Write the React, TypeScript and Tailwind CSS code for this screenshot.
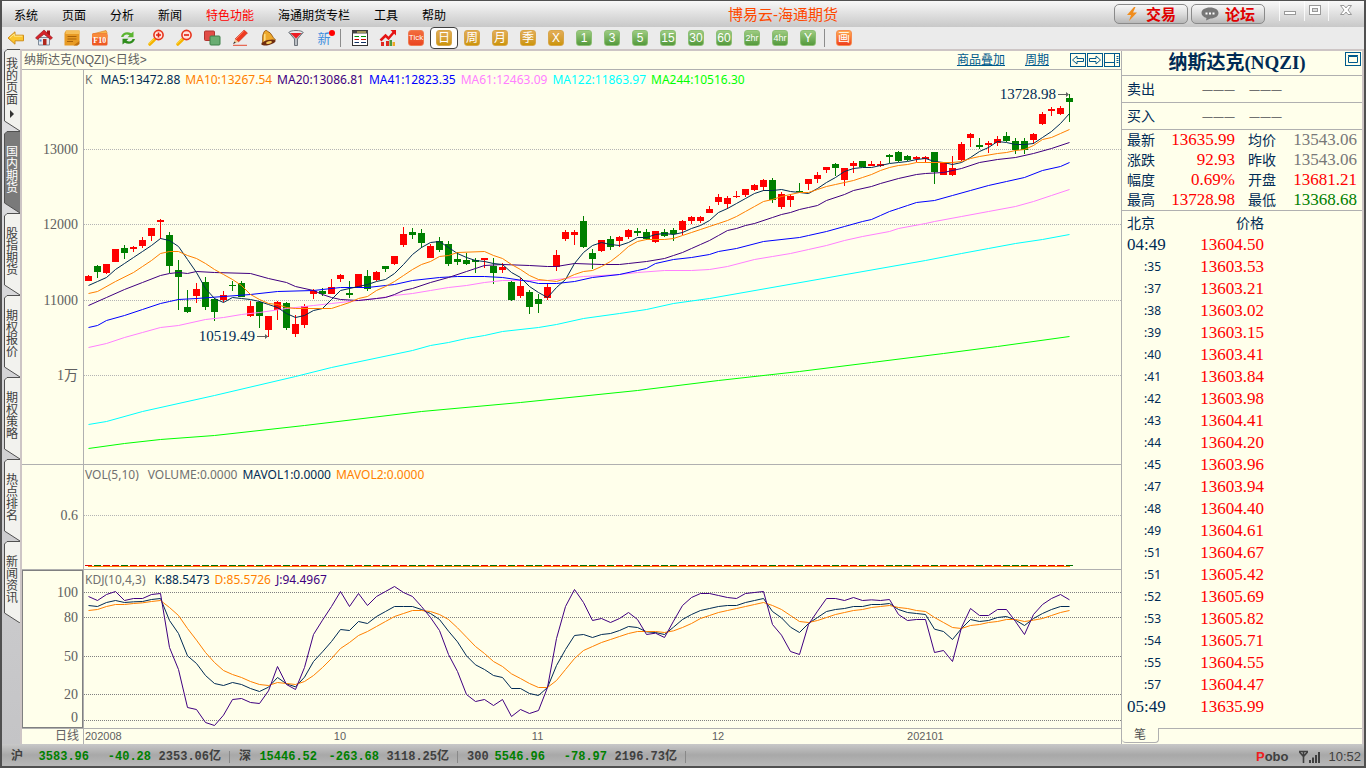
import type { ReactNode } from 'react';
import clsx from 'clsx';

type Candle = [dir: 'u' | 'd', high: number, top: number, bottom: number, low: number];
type Point = [index: number, y: number];

const STEP = 9;
const FIRST_X = 88;

const CANDLES: Candle[] = [
  ['u', 275, 276, 281, 281], ['d', 265, 266, 272, 278], ['u', 264, 264, 273, 274], ['u', 249, 249, 262, 262],
  ['d', 245, 248, 253, 259], ['u', 246, 247, 249, 252], ['u', 237, 240, 246, 248], ['u', 228, 228, 236, 241],
  ['u', 219, 220, 222, 239], ['d', 232, 235, 266, 273], ['d', 260, 270, 277, 310], ['d', 290, 307, 312, 313],
  ['u', 283, 289, 296, 303], ['d', 277, 282, 307, 310], ['d', 298, 299, 312, 321], ['u', 291, 295, 300, 302],
  ['d', 281, 285, 286, 291], ['d', 281, 283, 297, 297], ['u', 301, 306, 316, 317], ['d', 301, 302, 316, 328],
  ['u', 316, 316, 330, 337], ['u', 301, 302, 310, 320], ['d', 302, 303, 328, 330], ['u', 315, 324, 334, 337],
  ['u', 304, 306, 325, 328], ['u', 289, 291, 294, 299], ['d', 288, 291, 294, 296], ['u', 279, 287, 294, 294],
  ['u', 274, 275, 279, 282], ['d', 281, 293, 295, 298], ['u', 274, 274, 287, 288], ['d', 270, 276, 289, 291],
  ['u', 271, 272, 280, 281], ['d', 266, 266, 269, 272], ['u', 256, 256, 264, 265], ['u', 227, 234, 245, 247],
  ['d', 228, 232, 235, 239], ['d', 229, 233, 243, 248], ['u', 244, 246, 258, 258], ['d', 237, 241, 250, 252],
  ['d', 241, 244, 264, 266], ['d', 252, 259, 262, 265], ['d', 253, 260, 264, 265], ['d', 258, 260, 262, 273],
  ['u', 258, 258, 260, 268], ['d', 258, 266, 273, 284], ['u', 263, 267, 270, 273], ['d', 281, 282, 300, 301],
  ['u', 278, 286, 296, 298], ['d', 290, 292, 307, 314], ['d', 294, 299, 304, 313], ['u', 284, 287, 298, 300],
  ['u', 250, 255, 267, 271], ['u', 230, 232, 239, 241], ['u', 230, 232, 235, 245], ['d', 216, 221, 247, 248],
  ['d', 249, 253, 259, 269], ['u', 240, 240, 251, 252], ['d', 236, 239, 247, 250], ['u', 236, 237, 241, 247],
  ['u', 229, 230, 237, 239], ['d', 228, 231, 233, 236], ['d', 229, 232, 239, 240], ['u', 231, 231, 242, 243],
  ['d', 229, 232, 236, 237], ['d', 228, 230, 234, 241], ['u', 220, 221, 230, 235], ['u', 216, 217, 221, 224],
  ['u', 216, 217, 221, 223], ['u', 206, 209, 213, 213], ['u', 194, 197, 202, 205], ['u', 196, 198, 204, 209],
  ['u', 191, 196, 197, 198], ['u', 189, 189, 195, 197], ['u', 184, 185, 190, 191], ['u', 179, 180, 187, 191],
  ['d', 178, 180, 200, 203], ['u', 192, 194, 207, 209], ['u', 194, 196, 200, 207], ['d', 183, 191, 192, 192],
  ['u', 179, 179, 184, 190], ['u', 172, 175, 179, 183], ['u', 167, 167, 170, 173], ['d', 163, 164, 168, 176],
  ['u', 168, 168, 180, 186], ['u', 161, 163, 166, 173], ['d', 161, 161, 167, 167], ['u', 161, 164, 166, 166],
  ['u', 161, 164, 166, 167], ['d', 154, 155, 157, 163], ['d', 151, 152, 161, 162], ['d', 155, 156, 160, 161],
  ['u', 156, 157, 159, 162], ['u', 156, 157, 159, 162], ['d', 152, 152, 172, 184], ['u', 162, 162, 175, 175],
  ['u', 156, 168, 175, 176], ['u', 142, 144, 160, 161], ['u', 133, 134, 138, 147], ['d', 138, 145, 147, 149],
  ['u', 141, 143, 145, 153], ['u', 136, 139, 143, 146], ['d', 132, 136, 141, 142], ['d', 138, 141, 150, 154],
  ['d', 138, 141, 150, 154], ['u', 133, 134, 140, 144], ['u', 112, 114, 124, 125], ['u', 107, 109, 111, 116],
  ['u', 106, 108, 114, 115], ['d', 94, 98, 102, 122],
];

const every = (ys: number[]): Point[] => ys.map((y, i) => [i, y]);

const MA_LINES: { color: string; points: Point[] }[] = [
  {
    color: '#00ff00',
    points: [[0, 448], [4, 443], [8, 439], [14, 435], [24, 425], [37, 411], [48, 402], [61, 390], [70, 380], [79, 371], [87, 362], [95, 353], [101, 346], [109, 336]],
  },
  {
    color: '#00ffff',
    points: [[0, 424], [2, 421], [6, 411], [14, 395], [23, 376], [27, 367], [36, 350], [38, 345], [40, 342], [42, 338], [44, 335], [46, 331], [50, 327], [52, 324], [55, 318], [59, 313], [62, 309], [65, 303], [69, 298], [93, 260], [97, 253], [100, 248], [103, 243], [106, 239], [109, 234]],
  },
  {
    color: '#ff80ff',
    points: [[0, 347], [2, 343], [4, 337], [6, 332], [8, 327], [10, 325], [13, 319], [15, 317], [17, 314], [19, 312], [22, 308], [25, 305], [27, 303], [30, 300], [32, 298], [34, 295], [36, 293], [38, 290], [40, 287], [42, 285], [44, 282], [46, 280], [51, 280], [53, 278], [55, 276], [59, 274], [61, 272], [64, 270], [67, 270], [69, 269], [71, 266], [74, 259], [76, 256], [78, 253], [80, 249], [82, 245], [84, 240], [86, 236], [89, 231], [90, 228], [93, 223], [94, 221], [97, 216], [100, 211], [103, 206], [105, 201], [107, 195], [109, 189]],
  },
  {
    color: '#0000ff',
    points: [[0, 327], [1, 325], [2, 320], [4, 315], [6, 309], [8, 303], [9, 301], [10, 299], [12, 298], [15, 296], [18, 294], [21, 291], [25, 290], [28, 287], [31, 287], [33, 285], [34, 284], [36, 280], [39, 277], [41, 276], [44, 276], [46, 277], [49, 281], [50, 283], [52, 283], [54, 281], [56, 277], [59, 274], [61, 270], [62, 268], [63, 263], [65, 259], [67, 257], [69, 254], [70, 251], [72, 248], [75, 241], [79, 237], [80, 235], [82, 231], [84, 226], [86, 221], [87, 219], [88, 215], [89, 211], [90, 208], [91, 205], [92, 202], [94, 200], [96, 195], [98, 190], [100, 185], [102, 181], [104, 177], [106, 170], [108, 166], [109, 162]],
  },
  {
    color: '#400080',
    points: [[0, 305], [2, 297], [4, 289], [6, 282], [8, 275], [9, 273], [10, 272], [11, 273], [12, 271], [14, 272], [18, 273], [20, 278], [22, 282], [23, 286], [25, 290], [26, 294], [27, 297], [28, 299], [30, 300], [32, 298], [33, 297], [34, 294], [35, 290], [36, 288], [38, 282], [40, 277], [42, 271], [44, 265], [46, 264], [49, 265], [51, 266], [52, 266], [54, 263], [57, 264], [59, 264], [60, 263], [62, 261], [64, 258], [65, 255], [66, 252], [67, 248], [68, 244], [69, 240], [70, 235], [71, 230], [72, 228], [73, 225], [74, 223], [76, 217], [77, 214], [78, 212], [79, 209], [80, 207], [81, 205], [82, 200], [84, 194], [85, 190], [87, 186], [88, 183], [90, 178], [92, 174], [93, 173], [95, 172], [97, 168], [99, 162], [101, 159], [103, 157], [105, 153], [107, 148], [109, 142]],
  },
  {
    color: '#002b55',
    points: every([285, 281, 277, 269, 263, 257, 251, 245, 238, 240, 246, 259, 272, 288, 298, 302, 297, 298, 299, 301, 304, 307, 313, 317, 315, 310, 308, 299, 290, 288, 286, 284, 281, 279, 273, 264, 254, 247, 242, 241, 247, 253, 257, 260, 261, 263, 264, 272, 277, 286, 292, 297, 287, 279, 263, 252, 245, 242, 244, 245, 242, 237, 237, 234, 233, 234, 232, 228, 225, 220, 212, 208, 203, 198, 193, 190, 190, 189, 191, 192, 193, 188, 182, 177, 171, 168, 167, 167, 165, 163, 162, 161, 159, 158, 161, 162, 164, 162, 157, 151, 147, 141, 142, 144, 144, 143, 137, 131, 123, 113]),
  },
  {
    color: '#ff8000',
    points: [[0, 293], [1, 291], [3, 281], [5, 272], [6, 266], [7, 260], [8, 253], [9, 251], [10, 251], [11, 255], [12, 258], [13, 263], [14, 269], [15, 274], [16, 279], [17, 285], [18, 294], [19, 299], [20, 303], [21, 304], [22, 307], [23, 308], [27, 308], [28, 305], [29, 302], [30, 298], [31, 296], [32, 290], [33, 286], [34, 281], [35, 275], [36, 269], [37, 264], [38, 261], [39, 256], [40, 255], [41, 252], [44, 251], [45, 255], [46, 258], [47, 264], [48, 269], [49, 275], [50, 279], [51, 280], [52, 281], [53, 278], [54, 274], [55, 271], [56, 270], [57, 266], [58, 261], [59, 254], [60, 246], [61, 241], [62, 239], [64, 239], [65, 238], [66, 235], [67, 232], [68, 229], [69, 226], [70, 223], [71, 220], [72, 216], [73, 211], [74, 206], [75, 201], [76, 199], [77, 196], [78, 194], [79, 192], [80, 192], [81, 189], [82, 186], [83, 184], [84, 182], [85, 180], [86, 177], [87, 174], [88, 170], [89, 167], [90, 165], [91, 164], [92, 162], [96, 162], [97, 161], [98, 158], [99, 156], [101, 153], [102, 152], [103, 150], [104, 149], [105, 145], [106, 139], [107, 137], [108, 133], [109, 129]],
  },
];

// KDJ curves use a finer vertical unit: three per pixel
const KDJ_LINES = [
  {
    color: '#002b55',
    ys: [136, 139, 127, 121, 127, 125, 124, 118, 115, 181, 220, 287, 310, 346, 370, 376, 367, 373, 385, 394, 381, 352, 371, 380, 351, 304, 275, 244, 208, 211, 184, 190, 169, 154, 139, 139, 139, 148, 160, 178, 213, 245, 287, 314, 328, 346, 352, 385, 385, 400, 406, 382, 316, 268, 226, 223, 232, 223, 220, 211, 199, 202, 215, 217, 223, 201, 178, 163, 151, 145, 139, 136, 136, 127, 121, 115, 154, 173, 201, 217, 190, 172, 154, 148, 145, 139, 139, 133, 133, 130, 148, 157, 160, 163, 207, 214, 238, 205, 178, 184, 181, 172, 169, 180, 196, 175, 160, 148, 139, 139],
  },
  {
    color: '#ff8000',
    ys: [151, 148, 139, 133, 133, 130, 128, 124, 121, 142, 166, 205, 240, 277, 307, 331, 343, 352, 364, 373, 376, 367, 370, 373, 364, 346, 322, 295, 265, 247, 226, 214, 199, 184, 169, 160, 151, 151, 154, 163, 178, 203, 231, 259, 280, 304, 319, 341, 355, 370, 382, 382, 361, 328, 295, 271, 259, 247, 238, 229, 220, 214, 214, 214, 217, 212, 202, 190, 175, 166, 157, 151, 145, 139, 133, 127, 136, 148, 166, 184, 187, 181, 172, 163, 157, 151, 148, 142, 139, 136, 142, 145, 151, 154, 172, 187, 202, 205, 196, 193, 187, 184, 178, 178, 184, 180, 175, 166, 157, 151],
  },
  {
    color: '#400080',
    ys: [109, 121, 103, 94, 121, 115, 115, 103, 100, 262, 328, 442, 448, 487, 496, 465, 418, 415, 427, 430, 392, 319, 373, 388, 322, 223, 180, 139, 94, 139, 100, 136, 109, 94, 79, 97, 109, 139, 172, 211, 283, 334, 403, 424, 418, 436, 418, 469, 448, 460, 451, 382, 235, 139, 88, 127, 181, 175, 187, 175, 157, 178, 223, 219, 232, 183, 136, 112, 100, 100, 106, 112, 115, 100, 97, 94, 193, 225, 274, 283, 193, 153, 115, 115, 121, 112, 121, 119, 121, 118, 163, 181, 178, 178, 277, 271, 304, 202, 145, 166, 166, 148, 148, 184, 223, 163, 133, 115, 103, 119],
  },
];

const toPoints = (points: Point[]) => points.map(([i, y]) => `${FIRST_X + i * STEP + 0.5},${y + 0.5}`).join(' ');

const MENU = ['系统', '页面', '分析', '新闻', '特色功能', '海通期货专栏', '工具', '帮助'];
const TABS = ['我的页面', '国内期货', '股指期货', '期权报价', '期权策略', '热点排名', '新闻资讯'];

const TICKS = [
  ['04:49', '13604.50'], [':35', '13603.53'], [':37', '13603.21'], [':38', '13603.02'], [':39', '13603.15'],
  [':40', '13603.41'], [':41', '13603.84'], [':42', '13603.98'], [':43', '13604.41'], [':44', '13604.20'],
  [':45', '13603.96'], [':47', '13603.94'], [':48', '13604.40'], [':49', '13604.61'], [':51', '13604.67'],
  [':51', '13605.42'], [':52', '13605.69'], [':53', '13605.82'], [':54', '13605.71'], [':55', '13604.55'],
  [':57', '13604.47'], ['05:49', '13635.99'],
];

const QUOTES = [
  ['最新', '13635.99', 'text-[#ff0000]', '均价', '13543.06', 'text-[#787878]'],
  ['涨跌', '92.93', 'text-[#ff0000]', '昨收', '13543.06', 'text-[#787878]'],
  ['幅度', '0.69%', 'text-[#ff0000]', '开盘', '13681.21', 'text-[#ff0000]'],
  ['最高', '13728.98', 'text-[#ff0000]', '最低', '13368.68', 'text-[#008000]'],
];

const INDICES = [
  ['沪', '3583.96', '-40.28', '2353.06亿'],
  ['深', '15446.52', '-263.68', '3118.25亿'],
  ['300', '5546.96', '-78.97', '2196.73亿'],
];

const MONTHS = [
  { label: '202008', span: 249 },
  { label: '10', span: 198 },
  { label: '11', span: 180 },
  { label: '12', span: 195 },
  { label: '202101', span: 215 },
];

const mono = "font-['Liberation_Mono','Noto_Sans_CJK_SC',monospace]";
const figures = "font-['Liberation_Serif','Noto_Sans_CJK_SC',serif]";

/* ---------- toolbar ---------- */

function ToolButton({ label, active, children }: { label: string; active?: boolean; children: ReactNode }) {
  return (
    <button
      type="button"
      aria-label={label}
      className={clsx(
        'flex h-[22px] w-7 items-center justify-center',
        active && 'rounded border border-[#404040] bg-white',
      )}
    >
      {children}
    </button>
  );
}

const TILE_COLORS = {
  gold: 'from-[#e3ad55] to-[#cc9500] border-[#d8a64a]',
  green: 'from-[#9ccb80] to-[#549a3c] border-[#8dbf74]',
  red: 'from-[#f26b3c] to-[#ea4420] border-[#ef7a50]',
  orange: 'from-[#ffac50] to-[#ee3a1c] border-[#f58b50]',
};

function Tile({ text, color }: { text: string; color: keyof typeof TILE_COLORS }) {
  const size = text.length > 3 ? 'text-[8px]' : text.length > 2 ? 'text-[9px]' : 'text-[12px]';
  return (
    <span
      className={clsx(
        'flex h-4 w-4 items-center justify-center rounded-[3px] border bg-linear-to-b leading-none whitespace-nowrap text-white',
        size,
        TILE_COLORS[color],
      )}
    >
      {text}
    </span>
  );
}

function Icon({ children }: { children: ReactNode }) {
  return (
    <svg viewBox="0 0 18 18" className="h-[18px] w-[18px]" fill="none" aria-hidden="true">
      {children}
    </svg>
  );
}

function Magnifier({ plus }: { plus?: boolean }) {
  return (
    <Icon>
      <path d="M7.5 10.5 2.8 15.2" stroke="#f5b400" strokeWidth="3.2" strokeLinecap="round" />
      <path d="M7.8 9 2 14.6" stroke="#ffdf50" strokeWidth="1" strokeLinecap="round" />
      <circle cx="11.5" cy="6" r="4.6" fill="#ffe3dc" stroke="#e8331c" strokeWidth="1.6" />
      <path d={plus ? 'M9 6h5M11.5 3.5v5' : 'M9 6h5'} stroke="#e02010" strokeWidth="1.6" />
    </Icon>
  );
}

function Toolbar() {
  return (
    <div className="flex h-[22px] shrink-0 items-center bg-[#ebebeb]">
      <ToolButton label="后退">
        <Icon>
          <path d="M1 9 8 2.8v3.4h8.5v5.6H8v3.4z" fill="#fbc62e" stroke="#cf8d1b" />
          <path d="M3 8.7 7.3 5v2.2h8" stroke="#ffe88c" />
        </Icon>
      </ToolButton>
      <ToolButton label="首页">
        <Icon>
          <path d="M3.5 8.5h11V16h-11z" fill="#e4e8ee" stroke="#7f8a98" />
          <path d="M12 1.5h3V6h-3z" fill="#a51616" />
          <path d="M9 1 .5 8.8l1.8 1.8L9 5.2l6.7 5.4 1.8-1.8z" fill="#d6232a" stroke="#8d1218" strokeWidth=".6" />
          <path d="M8 10h3.5v6H8z" fill="#b0281c" />
          <path d="M4.5 10.5h2v2h-2z" fill="#4d86c6" />
        </Icon>
      </ToolButton>
      <ToolButton label="记事">
        <Icon>
          <path d="M3 1.5h13.5V12L14 16.5H1.5V4z" fill="#e79a24" />
          <path d="M3 1.5h13.5V5H2.5z" fill="#f6bf59" />
          <path d="M4.5 7.5h9M4.5 10h9M4 12.5h6" stroke="#a9620a" />
          <path d="M10.5 16.5 16.5 12v3l-2 1.5z" fill="#c0700e" />
        </Icon>
      </ToolButton>
      <ToolButton label="F10">
        <Icon>
          <path d="M1.5 5 15 1.5l1 2V5z" fill="#f7b54a" stroke="#d9781f" strokeWidth=".6" />
          <rect x="1" y="4.5" width="15.5" height="12" rx="1.5" fill="#ee5a22" />
          <rect x="1" y="4.5" width="15.5" height="5" rx="1.5" fill="#f88a3c" />
          <text x="8.8" y="14" fontSize="8" fontWeight="700" fill="#fff" textAnchor="middle" fontFamily="Liberation Serif, serif">F10</text>
        </Icon>
      </ToolButton>
      <ToolButton label="刷新">
        <Icon>
          <path d="M2 8C3 3.5 8 2 12.3 4.3l2.2-1.800v5.800h-6l2-2C7.5 4.800 5 5.800 4.500 8z" fill="#5bb531" />
          <path d="M16 10c-1 4.500-6 6-10.300 3.700L3.500 15.500V9.700h6l-2 2c3 1.500 5.500.5 6-1.700z" fill="#2e8c1c" />
        </Icon>
      </ToolButton>
      <ToolButton label="放大"><Magnifier plus /></ToolButton>
      <ToolButton label="缩小"><Magnifier /></ToolButton>
      <ToolButton label="叠加">
        <Icon>
          <rect x="1.5" y="2" width="10" height="9.5" rx="1" fill="#e14c46" stroke="#b13430" />
          <rect x="7" y="7" width="10" height="9" rx="1" fill="#69ad72" stroke="#3d8048" />
        </Icon>
      </ToolButton>
      <ToolButton label="画线">
        <Icon>
          <path d="M13 1 16.5 4 7.5 13 4 10z" fill="#ee3a20" stroke="#b82410" strokeWidth=".5" />
          <path d="M13 1.5 5 10" stroke="#ff8a70" />
          <path d="M4 10 7.5 13l-5 1.8z" fill="#f2c690" />
          <path d="m2 15 1.4-2.5 1.4 1.3z" fill="#333" />
          <path d="M2 16.3h14" stroke="#e54930" />
        </Icon>
      </ToolButton>
      <ToolButton label="预警">
        <Icon>
          <path d="M5 3c.8-1.8 3-2 3.800-.5C12.500 3.500 13 8 16.500 11L3 15.500C4.500 11 2.500 7 5 3z" fill="#eea92c" stroke="#8a4d0c" strokeWidth=".8" />
          <path d="M6 5c-.8 2 .5 5-.5 8" stroke="#ffe08a" strokeWidth="1.5" />
          <ellipse cx="9.5" cy="13.5" rx="7.3" ry="2.5" fill="#6f2c10" transform="rotate(-14 9.5 13.5)" />
          <ellipse cx="10" cy="13.5" rx="3" ry="1.3" fill="#f7ca5a" transform="rotate(-14 10 13.5)" />
        </Icon>
      </ToolButton>
      <ToolButton label="筛选">
        <Icon>
          <path d="M2 3.5 7.5 10v6.5h3V10L16 3.5z" fill="#b9bdc2" stroke="#6e747b" />
          <ellipse cx="9" cy="3.5" rx="7" ry="2" fill="#e7e9eb" stroke="#6e747b" />
          <path d="M3.5 4h11L9 9.5z" fill="#ee1c24" />
        </Icon>
      </ToolButton>
      <ToolButton label="新">
        <span className="relative text-[13px] leading-none text-[#3f8fdf]">
          新
          <span className="absolute -top-0.5 -right-1 h-1.5 w-1.5 rounded-full bg-[#ff0000]" />
        </span>
      </ToolButton>
      <span className="mr-[5px] ml-0.5 h-[18px] w-px bg-[#8c8c8c]" />
      <ToolButton label="报价">
        <Icon>
          <rect x="1.5" y="1.5" width="15" height="15" fill="#fff" stroke="#333" />
          <path d="M1 3h16" stroke="#444" strokeWidth="3" />
          <path d="M6 3h9" stroke="#fae870" />
          <path d="M3.5 7.5H8M10 7.5h5" stroke="#009000" />
          <path d="M3.5 10.5H8M10 10.5h5" stroke="#d00000" />
          <path d="M3.5 13.5H8M10 13.5h5" stroke="#103060" />
        </Icon>
      </ToolButton>
      <ToolButton label="分时图">
        <Icon>
          <path d="M2 13h3v4H2zM7 12h3v5H7z" fill="#e02a20" />
          <path d="M10.5 11H13v6h-2.5z" fill="#4b9a3c" />
          <path d="M13.5 13H16v4h-2.5z" fill="#f0a828" />
          <path d="m1.5 11.5 5-5 3 3L15 3" stroke="#e51414" strokeWidth="2.5" />
          <path d="M11.5 1H17v5.5z" fill="#e51414" />
        </Icon>
      </ToolButton>
      <ToolButton label="Tick"><Tile text="Tick" color="red" /></ToolButton>
      <ToolButton label="日线" active><Tile text="日" color="gold" /></ToolButton>
      {['周', '月', '季', 'X'].map((t) => (
        <ToolButton key={t} label={t}><Tile text={t} color="gold" /></ToolButton>
      ))}
      {['1', '3', '5', '15', '30', '60', '2hr', '4hr', 'Y'].map((t) => (
        <ToolButton key={t} label={t}><Tile text={t} color="green" /></ToolButton>
      ))}
      <span className="mr-[5px] ml-0.5 h-[18px] w-px bg-[#8c8c8c]" />
      <ToolButton label="画"><Tile text="画" color="orange" /></ToolButton>
    </div>
  );
}

/* ---------- title bar ---------- */

function TitleBar() {
  const pill =
    'flex h-5 w-[74px] items-center justify-center gap-2 rounded-[5px] border border-[#8a8a8a] bg-linear-to-b from-[#f8f8f8] via-[#dcdcdc] to-[#b8b8b8] text-[15px] leading-none font-bold text-[#e00000]';
  return (
    <header className="flex h-[26px] shrink-0 items-center bg-linear-to-b from-[#f8f8f8] to-[#c8c8c8]">
      <nav className="flex gap-6 pt-[3px] pl-3 text-[12px] leading-4 text-black">
        {MENU.map((m) => (
          <button key={m} type="button" className={m === '特色功能' ? 'text-[#ff0000]' : ''}>{m}</button>
        ))}
      </nav>
      <h1 className="flex-1 pt-0.5 pl-1.5 text-center text-[15px] leading-5 text-[#ff4800]">博易云-海通期货</h1>
      <div className="flex gap-[3px]">
        <button type="button" className={pill}>
          <svg viewBox="0 0 12 14" className="h-3.5 w-3" aria-hidden="true">
            <path d="M8 0 1 8h4l-2 6 8-8.5H7L9.5 0z" fill="#f08c1c" />
          </svg>
          交易
        </button>
        <button type="button" className={pill}>
          <svg viewBox="0 0 18 14" className="-mr-0.5 h-3.5 w-[18px]" aria-hidden="true">
            <path d="M9 .5c5 0 8.5 2.3 8.500 5.500S14 11.500 9.500 11.500L5 13.500l.5-2.500C2.500 10.300.5 8.300.5 6 .5 2.800 4 .5 9 .5z" fill="#777" />
            <path d="M4.5 5.5h2v2h-2zM8 5.5h2v2H8zM11.5 5.5h2v2h-2z" fill="#fff" />
          </svg>
          论坛
        </button>
      </div>
      <div className="ml-[14px] flex self-start text-[#999]">
        <button type="button" aria-label="最小化" className="h-5 w-[25px] border-l border-white/80">
          <svg viewBox="0 0 24 18" className="h-[18px] w-6"><rect x="4.5" y="9.5" width="11" height="3" fill="#fff" stroke="#999" /></svg>
        </button>
        <button type="button" aria-label="最大化" className="h-5 w-6 border-l border-white/80">
          <svg viewBox="0 0 24 18" className="h-[18px] w-6">
            <rect x="4.5" y="3.5" width="11" height="9" fill="#fff" stroke="#999" />
            <rect x="7.5" y="6.5" width="5" height="3" fill="#ddd" stroke="#999" />
          </svg>
        </button>
        <button type="button" aria-label="关闭" className="h-5 w-[36px] border-l border-white/80">
          <svg viewBox="0 0 34 18" className="h-[18px] w-[34px]">
            <path d="M11.5 3.5H15L17 6l2-2.5h3.5L19 8l3.5 4.5H19L17 10l-2 2.5h-3.5L15 8z" fill="#fff" stroke="#999" />
          </svg>
        </button>
      </div>
    </header>
  );
}

/* ---------- left tabs ---------- */

function SideTabs() {
  return (
    <nav className="flex w-[18px] shrink-0 flex-col bg-linear-to-b from-[#e2e2e4] to-[#c4c4c6] pl-0.5">
      {TABS.map((tab, i) => {
        const active = i === 1;
        return (
          <button
            key={tab}
            type="button"
            className={clsx('relative flex h-[82px] w-4 flex-col items-center justify-center pb-1', active ? 'text-white' : 'text-[#404040]')}
          >
            <svg viewBox="0 0 16 82" className="absolute inset-0 h-full w-full" aria-hidden="true">
              <path d="M16 .5H3L.5 3v69L16 82" fill={active ? '#7a7a7a' : '#f2f2ee'} stroke="#505050" />
            </svg>
            <span className="relative w-3 text-[12px] leading-3 break-all">{tab}</span>
            {i === 0 && (
              <svg viewBox="0 0 4 8" className="relative mt-1 h-2 w-1" aria-hidden="true">
                <path d="M0 0v8l4-4z" fill="#333" />
              </svg>
            )}
          </button>
        );
      })}
    </nav>
  );
}

/* ---------- charts ---------- */

interface AxisLabel {
  text: string;
  at: number;
}

function Axis({ labels, top, height, boxed }: { labels: AxisLabel[]; top: number; height: number; boxed?: boolean }) {
  return (
    <svg className={clsx('h-full w-[61px] shrink-0', figures, boxed && 'border border-[#808080]')}>
      {labels.map((l) => (
        <text
          key={l.text}
          x={boxed ? 55 : 56}
          y={`${((l.at - top) / height) * 100}%`}
          dy="5"
          textAnchor="end"
          fontSize="14"
          fill="#606060"
        >
          {l.text}
        </text>
      ))}
    </svg>
  );
}

function Legend({ items, tight }: { items: [string, string][]; tight?: boolean }) {
  return (
    <div
      className={clsx(
        "flex shrink-0 gap-[5px] pl-px font-['Noto_Sans',sans-serif] text-[12px] whitespace-nowrap",
        tight ? 'h-4 pt-0.5 leading-4' : 'h-5 leading-5',
      )}
    >
      {items.map(([text, color]) => (
        <span key={text} className={color}>{text}</span>
      ))}
    </div>
  );
}

function GridLine({ y, color }: { y: number; color: string }) {
  return (
    <line x1={84} x2={1121} y1={y} y2={y} stroke={color} strokeDasharray="1 1" vectorEffect="non-scaling-stroke" shapeRendering="crispEdges" />
  );
}

function PriceChart() {
  return (
    <svg viewBox="84 90 1037 374" preserveAspectRatio="none" className={clsx('min-h-0 w-full flex-1 overflow-visible', figures)}>
      {[149.5, 224.5, 300.5, 375.5].map((y) => (
        <GridLine key={y} y={y} color="#b4b4b4" />
      ))}
      <g shapeRendering="crispEdges">
        {CANDLES.map(([dir, high, top, bottom, low], i) => {
          const x = FIRST_X + i * STEP;
          return (
            <g key={i} fill={dir === 'u' ? '#ff0000' : '#008000'}>
              <rect x={x} y={high} width={1} height={Math.max(1, low - high)} />
              <rect x={x - 3} y={top} width={7} height={bottom - top} />
            </g>
          );
        })}
      </g>
      {MA_LINES.map((line) => (
        <polyline key={line.color} points={toPoints(line.points)} fill="none" stroke={line.color} vectorEffect="non-scaling-stroke" />
      ))}
      <g fontSize="15" fill="#002b55" textAnchor="end">
        <text x={1056} y={99}>13728.98</text>
        <text x={255} y={341}>10519.49</text>
      </g>
      <g stroke="#606060" fill="#606060">
        <path d="M1058 94.5h10M257 336.5h11" />
        <path d="m1066 92 3 2.5-3 2.5zM265 334l3 2.5-3 2.5z" stroke="none" />
      </g>
    </svg>
  );
}

function VolumeChart() {
  return (
    <svg viewBox="84 485 1037 84" preserveAspectRatio="none" className="min-h-0 w-full flex-1" shapeRendering="crispEdges">
      <GridLine y={515.5} color="#b4b4b4" />
      {CANDLES.map(([dir], i) => (
        <rect key={i} x={FIRST_X + i * STEP - 3} y={565} width={7} height={1} fill={dir === 'u' ? '#e00000' : '#007000'} />
      ))}
      <rect x={88} y={566} width={982} height={1} fill="#ff8000" />
    </svg>
  );
}

function KdjChart() {
  return (
    <svg viewBox="84 78 1037 426" preserveAspectRatio="none" className="min-h-0 w-full flex-1 overflow-visible">
      {[97, 172, 289, 403, 481].map((y) => (
        <GridLine key={y} y={y} color="#808080" />
      ))}
      {KDJ_LINES.map((line) => (
        <polyline key={line.color} points={toPoints(every(line.ys))} fill="none" stroke={line.color} vectorEffect="non-scaling-stroke" />
      ))}
    </svg>
  );
}

const HEADER_ICONS = [
  { label: '左移', d: 'M2.5 7 7 3v2.5h6.5v3H7V11z' },
  { label: '右移', d: 'M13.5 7 9 3v2.5H2.5v3H9V11z' },
  { label: '侧栏', d: 'M0 9.5h10M10.5 0v14M12.5 3.5h2M12.5 5.5h2M12.5 7.5h2M12.5 9.5h2' },
];

function ChartArea() {
  const plot = 'flex min-w-0 flex-1 flex-col border-l border-[#b0b0b0]';
  return (
    <main className="flex min-w-0 flex-1 flex-col">
      <div className="flex h-[19px] shrink-0 items-center border-b border-[#b0b0b0] pr-px pl-0.5 text-[12px] leading-4 text-[#606060]">
        <h2 className="flex-1">纳斯达克(NQZI)&lt;日线&gt;</h2>
        <div className="flex gap-5 text-[#005a8c] underline">
          <a href="#overlay">商品叠加</a>
          <a href="#period">周期</a>
        </div>
        <div className="ml-[21px] flex gap-px">
          {HEADER_ICONS.map(({ label, d }) => (
            <button key={label} type="button" aria-label={label}>
              <svg viewBox="0 0 16 14" className="h-3.5 w-4" fill="none" stroke="#005a8c">
                <rect x=".5" y=".5" width="15" height="13" />
                <path d={d} />
              </svg>
            </button>
          ))}
        </div>
      </div>

      <section className="flex min-h-0 flex-[394] border-b border-[#b0b0b0]">
        <Axis
          top={70}
          height={394}
          labels={[{ text: '13000', at: 149 }, { text: '12000', at: 224 }, { text: '11000', at: 300 }, { text: '1万', at: 375 }]}
        />
        <div className={plot}>
          <Legend
            items={[
              ['K', 'mr-[3px] text-[#707070]'],
              ['MA5:13472.88', 'text-[#002b55]'],
              ['MA10:13267.54', 'text-[#ff8000]'],
              ['MA20:13086.81', 'text-[#400080]'],
              ['MA41:12823.35', 'text-[#0000ff]'],
              ['MA61:12463.09', 'text-[#ff80ff]'],
              ['MA122:11863.97', 'text-[#00ffff]'],
              ['MA244:10516.30', 'text-[#00ff00]'],
            ]}
          />
          <PriceChart />
        </div>
      </section>

      <section className="flex min-h-0 flex-[104] border-b border-[#b0b0b0]">
        <Axis top={465} height={104} labels={[{ text: '0.6', at: 515 }]} />
        <div className={plot}>
          <Legend
            items={[
              ['VOL(5,10)', 'mr-1 text-[#707070]'],
              ['VOLUME:0.0000', 'text-[#707070]'],
              ['MAVOL1:0.0000', 'text-[#002b55]'],
              ['MAVOL2:0.0000', 'text-[#ff8000]'],
            ]}
          />
          <VolumeChart />
        </div>
      </section>

      <section className="flex min-h-0 flex-[158] border-b border-[#b0b0b0]">
        <Axis
          boxed
          top={571}
          height={156}
          labels={[{ text: '100', at: 592 }, { text: '80', at: 617 }, { text: '50', at: 656 }, { text: '20', at: 694 }, { text: '0', at: 717 }]}
        />
        <div className={plot}>
          <Legend
            tight
            items={[
              ['KDJ(10,4,3)', 'mr-1 text-[#707070]'],
              ['K:88.5473', 'text-[#002b55]'],
              ['D:85.5726', 'text-[#ff8000]'],
              ['J:94.4967', 'text-[#400080]'],
            ]}
          />
          <KdjChart />
        </div>
      </section>

      <div className="flex h-[15px] shrink-0 text-[11px] leading-[15px] text-[#606060]">
        <span className="w-[61px] pr-1 text-right text-[12px]">日线</span>
        <div className="flex flex-1 border-l border-[#b0b0b0]">
          {MONTHS.map((m) => (
            <span key={m.label} className="min-w-0 basis-0 pl-px" style={{ flexGrow: m.span }}>{m.label}</span>
          ))}
        </div>
      </div>
    </main>
  );
}

/* ---------- quote panel ---------- */

function QuotePanel() {
  const row = 'flex h-[27px] items-center border-b border-[#b0b0b0] pl-[5px]';
  return (
    <aside className="flex w-[241px] shrink-0 flex-col border-l border-[#b0b0b0] text-[14px] leading-5 text-[#002b55]">
      <div className="flex h-[25px] border-b border-[#b0b0b0]">
        <h2 className="flex-1 pl-[7px] text-center font-['Liberation_Serif','Noto_Sans_CJK_SC',serif] text-[19px] leading-6 font-bold">纳斯达克(NQZI)</h2>
        <button type="button" aria-label="还原" className="mt-px h-3.5 w-[17px]">
          <svg viewBox="0 0 16 14" className="h-3.5 w-4" fill="none" stroke="#005a8c">
            <rect x=".5" y=".5" width="15" height="13" />
            <path d="M3.5 4.5h9v6h-9zM3 3.5h10" />
          </svg>
        </button>
      </div>
      {['卖出', '买入'].map((side) => (
        <div key={side} className={row}>
          <span className="w-[75px]">{side}</span>
          <span className="flex gap-[14px] font-['Noto_Sans',sans-serif] text-[11px] text-[#707070]">
            <span>———</span>
            <span>———</span>
          </span>
        </div>
      ))}
      <table className="w-full table-fixed border-b border-[#b0b0b0]">
        <tbody>
          {QUOTES.map(([a, av, ac, b, bv, bc]) => (
            <tr key={a} className="h-5">
              <th className="w-[37px] p-0 pl-[5px] text-left font-normal">{a}</th>
              <td className={clsx('w-[76px] p-0 text-right text-[17px]', figures, ac)}>{av}</td>
              <th className="w-[44px] p-0 pl-[13px] text-left font-normal">{b}</th>
              <td className={clsx('p-0 pr-[5px] text-right text-[17px]', figures, bc)}>{bv}</td>
            </tr>
          ))}
        </tbody>
      </table>
      <table className="w-[142px] table-fixed">
        <thead>
          <tr className="h-[23px]">
            <th className="w-[46px] p-0 pl-[5px] text-left font-normal">北京</th>
            <th className="p-0 text-right font-normal">价格</th>
          </tr>
        </thead>
        <tbody>
          {TICKS.map(([time, price]) => (
            <tr key={price + time} className="h-[22px]">
              {time.length > 3 ? (
                <td className={clsx('p-0 pl-[5px] text-[17px]', figures)}>{time}</td>
              ) : (
                <td className="p-0 pr-[7px] text-right font-['Noto_Sans',sans-serif] text-[12px]">{time}</td>
              )}
              <td className={clsx('p-0 text-right text-[17px] text-[#ff0000]', figures)}>{price}</td>
            </tr>
          ))}
        </tbody>
      </table>
      <div className="mt-auto flex h-4 shrink-0 text-[12px] leading-[14px] text-[#505050]">
        <button type="button" className="h-[15px] w-[37px] rounded-b border-r border-b border-[#b0b0b0]">笔</button>
        <span className="flex-1 border-t border-[#b0b0b0]" />
      </div>
    </aside>
  );
}

function StatusBar() {
  return (
    <footer className={clsx('flex h-[22px] shrink-0 items-center bg-linear-to-b from-[#c8c8c8] via-[#a8a8a8] to-[#b8b8b8] pt-[3px] text-[12px] leading-4 font-bold text-[#404040]', mono)}>
      {INDICES.map(([name, price, change, amount]) => (
        <div key={name} className="flex w-[228px] border-r border-[#888] pr-2 pl-[9px] leading-3">
          <span>{name}</span>
          <span className="flex-1 text-right text-[#008000]">{price}</span>
          <span className="w-[62px] text-right text-[#008000]">{change}</span>
          <span className="w-[70px] text-right">{amount}</span>
        </div>
      ))}
      <div className="ml-auto flex items-center pr-[3px] font-['Liberation_Sans',sans-serif]">
        <span className="text-[13px]"><span className="text-[#f02020]">P</span>obo</span>
        <svg viewBox="0 0 22 14" className="ml-2.5 h-3.5 w-[22px]" fill="none" stroke="#404040" aria-label="信号">
          <path d="M1 1.5h9M1.5 2l4 4.5 4-4.5M5.5 1v12" strokeWidth="1.6" />
          <path d="M12 10v3M15 7.5V13M18 5v8M21 2v11" strokeWidth="2" />
        </svg>
        <time className="ml-2 text-[13px] font-normal">10:52</time>
      </div>
    </footer>
  );
}

export default function App() {
  return (
    <div className="flex h-screen w-full flex-col overflow-hidden border-x-2 border-t border-b-2 border-[#505050] bg-[#ebebeb] font-['Liberation_Sans','Noto_Sans_CJK_SC',sans-serif]">
      <TitleBar />
      <Toolbar />
      <div className="flex min-h-0 flex-1">
        <SideTabs />
        <div className="flex min-w-0 flex-1 border-x-2 border-t-2 border-[#cdc5c5] bg-[#ffffeb]">
          <ChartArea />
          <QuotePanel />
        </div>
      </div>
      <StatusBar />
    </div>
  );
}
